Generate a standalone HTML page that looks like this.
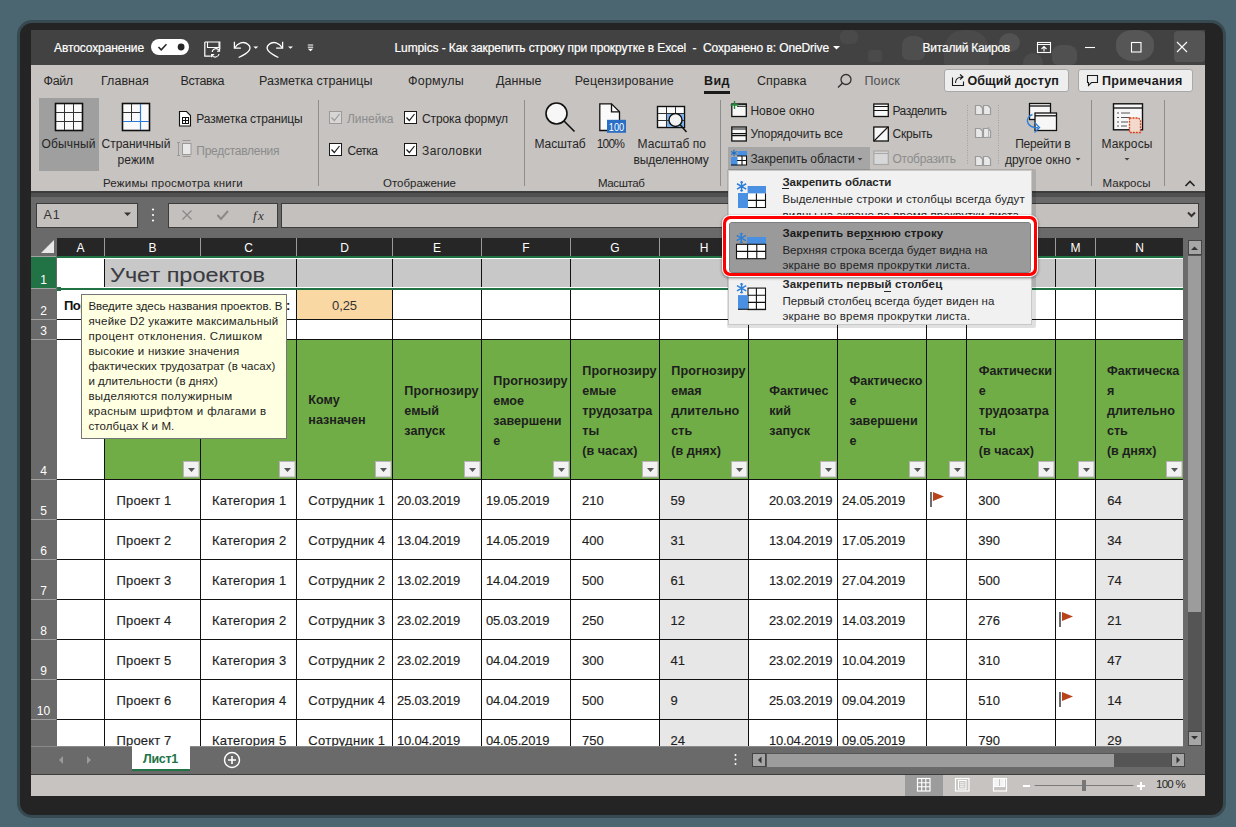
<!DOCTYPE html><html><head><meta charset="utf-8"><style>
*{margin:0;padding:0;box-sizing:border-box}
html,body{width:1236px;height:827px;overflow:hidden;background:#4b6670}
body{position:relative;font-family:"Liberation Sans",sans-serif}
.a{position:absolute}
.t{position:absolute;white-space:pre;line-height:1}
svg{position:absolute;overflow:visible}
</style></head><body>
<div class="a" style="left:17px;top:20px;width:1209px;height:798px;background:rgba(10,10,10,0.3);border-radius:15px;"></div>
<div class="a" style="left:20px;top:23px;width:1203px;height:792px;background:#242424;border-radius:12px;"></div>
<div class="a" style="left:31px;top:30px;width:1174px;height:35px;background:#424242;"></div>
<div class="a" style="left:902px;top:36px;width:23px;height:24px;background:#4e4e4e;border-radius:9px 9px 6px 6px;"></div>
<div class="a" style="left:944px;top:30px;width:45px;height:35px;background:#4a4a4a;border-radius:20px 20px 3px 3px;"></div>
<div class="a" style="left:999px;top:33px;width:21px;height:19px;background:#525252;border-radius:50%;"></div>
<div class="a" style="left:868px;top:50px;width:14px;height:12px;background:#4a4a4a;border-radius:3px;"></div>
<div class="a" style="left:840px;top:30px;width:18px;height:14px;background:#4a4a4a;border-radius:6px;"></div>
<div class="a" style="left:1023px;top:53px;width:20px;height:12px;background:#4c4c4c;border-radius:10px 10px 0 0;"></div>
<div class="a" style="left:1052px;top:45px;width:25px;height:20px;background:#505050;border-radius:40% 40% 6px 6px;"></div>
<div class="a" style="left:1116px;top:30px;width:38px;height:31px;background:#565656;border-radius:45%;"></div>
<div class="a" style="left:1174px;top:31px;width:31px;height:31px;background:#545454;border-radius:4px;"></div>
<span class="t" id="t0" style="letter-spacing:-0.106px;left:54px;top:41.84px;font-size:12px;color:#ffffff;-webkit-text-stroke:0.2px #fff;">Автосохранение</span>
<div class="a" style="left:151px;top:39px;width:38px;height:16px;background:#fff;border-radius:8px;"></div>
<svg style="left:0;top:0" width="1236" height="827"><path d="M158.5 47 l2.7 2.8 l5.3 -5.6" stroke="#262626" stroke-width="1.5" fill="none"/><circle cx="181.1" cy="47" r="3.4" fill="#262626"/><path d="M204.8 42 h15 v7 M204.8 42 v14.2 h6" stroke="#fff" stroke-width="1.2" fill="none"/><path d="M207.5 42 v5.5 h11.5 v-5.5" stroke="#fff" stroke-width="1.1" fill="none"/><path d="M212.2 52 a3.8 3.8 0 0 1 7 -1.5 M219.6 48.6 v2.6 h-2.6 M219 54 a3.8 3.8 0 0 1 -7 1.2 M211.6 57.2 v-2.6 h2.6" stroke="#fff" stroke-width="1.1" fill="none"/><path d="M234.4 41.8 v6.3 h6.5" stroke="#fff" stroke-width="1.3" fill="none"/><path d="M234.6 48 c3 -5 9 -7.5 13.5 -3.5 c4 3.5 2 8 -9.5 13" stroke="#fff" stroke-width="1.3" fill="none"/><path d="M253.3 46.5 h5 l-2.5 2.3 z" fill="#fff"/><path d="M282.6 41.8 v6.3 h-6.5" stroke="#fff" stroke-width="1.3" fill="none"/><path d="M282.4 48 c-3 -5 -9 -7.5 -13.5 -3.5 c-4 3.5 -1.5 8 9.5 13" stroke="#fff" stroke-width="1.3" fill="none"/><path d="M288 46.5 h5 l-2.5 2.3 z" fill="#fff"/><path d="M307.8 45 h5.4 M307.8 47.2 h5.4" stroke="#fff" stroke-width="1"/><path d="M307.8 48.8 h5.4 l-2.7 2.4 z" fill="#fff"/><path d="M833 46 h7 l-3.5 3.5 z" fill="#fff"/><rect x="1037.5" y="42.5" width="13" height="10" stroke="#fff" stroke-width="1.1" fill="none"/><path d="M1037.5 44.5 h13 M1044 51.5 v-5 M1041.5 49 l2.5 -2.5 l2.5 2.5" stroke="#fff" stroke-width="1.1" fill="none"/><path d="M1085 47.5 h10" stroke="#fff" stroke-width="1.1"/><rect x="1131.5" y="42.5" width="9.5" height="9.5" stroke="#fff" stroke-width="1.1" fill="none"/><path d="M1177 42 l10 10 M1187 42 l-10 10" stroke="#fff" stroke-width="1.1"/></svg>
<span class="t" id="t1" style="letter-spacing:-0.103px;left:394.5px;top:41.84px;font-size:12px;color:#ffffff;-webkit-text-stroke:0.2px #fff;">Lumpics - Как закрепить строку при прокрутке в Excel  -  Сохранено в: OneDrive</span>
<span class="t" id="t2" style="letter-spacing:-0.227px;left:922.6px;top:41.84px;font-size:12px;color:#ffffff;-webkit-text-stroke:0.2px #fff;">Виталий Каиров</span>
<div class="a" style="left:31px;top:65px;width:1174px;height:127px;background:#c6c3c0;"></div>
<div class="a" style="left:31px;top:191px;width:1174px;height:2px;background:#3c3c3c;"></div>
<span class="t" id="t3" style="letter-spacing:-0.409px;left:43.6px;top:74.92px;font-size:12.5px;color:#262626;">Файл</span>
<span class="t" id="t4" style="letter-spacing:0.032px;left:101px;top:74.92px;font-size:12.5px;color:#262626;">Главная</span>
<span class="t" id="t5" style="letter-spacing:-0.424px;left:180.5px;top:74.92px;font-size:12.5px;color:#262626;">Вставка</span>
<span class="t" id="t6" style="letter-spacing:-0.000px;left:259px;top:74.92px;font-size:12.5px;color:#262626;">Разметка страницы</span>
<span class="t" id="t7" style="letter-spacing:0.228px;left:408px;top:74.92px;font-size:12.5px;color:#262626;">Формулы</span>
<span class="t" id="t8" style="letter-spacing:0.071px;left:496px;top:74.92px;font-size:12.5px;color:#262626;">Данные</span>
<span class="t" id="t9" style="letter-spacing:0.191px;left:574.8px;top:74.92px;font-size:12.5px;color:#262626;">Рецензирование</span>
<span class="t" id="t10" style="letter-spacing:0.065px;left:757px;top:74.92px;font-size:12.5px;color:#262626;">Справка</span>
<span class="t" id="t11" style="letter-spacing:0.348px;left:704px;top:74.92px;font-size:12.5px;color:#1a1a1a;font-weight:700;">Вид</span>
<div class="a" style="left:704px;top:91px;width:26px;height:3px;background:#1a1a1a;"></div>
<span class="t" id="t12" style="letter-spacing:0.192px;left:864.4px;top:74.92px;font-size:12.5px;color:#505050;">Поиск</span>
<svg style="left:0;top:0" width="1236" height="827"><circle cx="846" cy="79.5" r="5" stroke="#333" stroke-width="1.3" fill="none"/><path d="M842.5 83 l-4.5 4.5" stroke="#333" stroke-width="1.5"/></svg>
<div class="a" style="left:943.7px;top:69px;width:125.5px;height:23px;background:#eeeeee;border:1px solid #a8a8a8;border-radius:3px;"></div>
<div class="a" style="left:1078.4px;top:69px;width:114.3px;height:23px;background:#eeeeee;border:1px solid #a8a8a8;border-radius:3px;"></div>
<span class="t" id="t13" style="letter-spacing:0.123px;left:967.4px;top:74.92px;font-size:12.5px;color:#1a1a1a;font-weight:700;">Общий доступ</span>
<span class="t" id="t14" style="letter-spacing:0.366px;left:1102px;top:74.92px;font-size:12.5px;color:#1a1a1a;font-weight:700;">Примечания</span>
<svg style="left:0;top:0" width="1236" height="827"><path d="M952.5 77.5 v8 h11 v-4" stroke="#1a1a1a" stroke-width="1.1" fill="none"/><path d="M955.5 83 c0 -4 3 -6 7 -6 M960 74.5 l3 2.5 l-3 2.5" stroke="#1a1a1a" stroke-width="1.1" fill="none"/><path d="M1087.5 75.5 h10 v7 h-6 l-3 3 v-3 h-1 z" stroke="#1a1a1a" stroke-width="1.1" fill="none"/></svg>
<div class="a" style="left:39px;top:98px;width:60px;height:73px;background:#9f9f9f;"></div>
<span class="t" id="t15" style="letter-spacing:0.136px;left:41.5px;top:138.14px;font-size:12px;color:#262626;">Обычный</span>
<span class="t" id="t16" style="letter-spacing:-0.025px;left:101.6px;top:138.14px;font-size:12px;color:#262626;">Страничный</span>
<span class="t" id="t17" style="letter-spacing:0.159px;left:117.4px;top:154.34px;font-size:12px;color:#262626;">режим</span>
<span class="t" id="t18" style="letter-spacing:-0.157px;left:196.3px;top:113.04px;font-size:12px;color:#262626;">Разметка страницы</span>
<span class="t" id="t19" style="letter-spacing:-0.266px;left:196.3px;top:144.64px;font-size:12px;color:#8c8c8c;">Представления</span>
<span class="t" id="t20" style="letter-spacing:0.208px;left:103px;top:177.57px;font-size:11.5px;color:#262626;">Режимы просмотра книги</span>
<div class="a" style="left:317.5px;top:100px;width:1px;height:86px;background:#8e8e8e;"></div>
<div class="a" style="left:523.5px;top:100px;width:1px;height:86px;background:#8e8e8e;"></div>
<div class="a" style="left:719.5px;top:100px;width:1px;height:86px;background:#8e8e8e;"></div>
<div class="a" style="left:1090.5px;top:100px;width:1px;height:86px;background:#8e8e8e;"></div>
<div class="a" style="left:1163.5px;top:100px;width:1px;height:86px;background:#8e8e8e;"></div>
<span class="t" id="t21" style="letter-spacing:-0.040px;left:347px;top:113.04px;font-size:12px;color:#8c8c8c;">Линейка</span>
<span class="t" id="t22" style="letter-spacing:-0.585px;left:347.6px;top:144.64px;font-size:12px;color:#262626;">Сетка</span>
<span class="t" id="t23" style="letter-spacing:-0.106px;left:422px;top:113.04px;font-size:12px;color:#262626;">Строка формул</span>
<span class="t" id="t24" style="letter-spacing:0.378px;left:422px;top:144.64px;font-size:12px;color:#262626;">Заголовки</span>
<span class="t" id="t25" style="letter-spacing:-0.011px;left:383px;top:177.57px;font-size:11.5px;color:#262626;">Отображение</span>
<span class="t" id="t26" style="letter-spacing:-0.006px;left:534.4px;top:137.84px;font-size:12px;color:#262626;">Масштаб</span>
<span class="t" id="t27" style="letter-spacing:-0.876px;left:596.8px;top:137.84px;font-size:12px;color:#262626;">100%</span>
<span class="t" id="t28" style="letter-spacing:0.054px;left:637.6px;top:137.84px;font-size:12px;color:#262626;">Масштаб по</span>
<span class="t" id="t29" style="letter-spacing:-0.106px;left:633.5px;top:153.64px;font-size:12px;color:#262626;">выделенному</span>
<span class="t" id="t30" style="letter-spacing:-0.400px;left:598px;top:177.57px;font-size:11.5px;color:#262626;">Масштаб</span>
<div class="a" style="left:728.2px;top:147.4px;width:141.5px;height:22.2px;background:#a6a6a6;"></div>
<span class="t" id="t31" style="letter-spacing:0.060px;left:750.4px;top:104.84px;font-size:12px;color:#262626;">Новое окно</span>
<span class="t" id="t32" style="letter-spacing:-0.084px;left:750.4px;top:128.44px;font-size:12px;color:#262626;">Упорядочить все</span>
<span class="t" id="t33" style="letter-spacing:-0.087px;left:750.4px;top:152.64px;font-size:12px;color:#262626;">Закрепить области</span>
<span class="t" id="t34" style="letter-spacing:-0.436px;left:892.4px;top:104.84px;font-size:12px;color:#262626;">Разделить</span>
<span class="t" id="t35" style="letter-spacing:-0.161px;left:892.4px;top:128.44px;font-size:12px;color:#262626;">Скрыть</span>
<span class="t" id="t36" style="letter-spacing:-0.212px;left:892.4px;top:152.64px;font-size:12px;color:#8c8c8c;">Отобразить</span>
<span class="t" id="t37" style="letter-spacing:-0.218px;left:1015.2px;top:137.84px;font-size:12px;color:#262626;">Перейти в</span>
<span class="t" id="t38" style="letter-spacing:0.040px;left:1005px;top:153.64px;font-size:12px;color:#262626;">другое окно</span>
<span class="t" id="t39" style="letter-spacing:0.153px;left:1101.5px;top:137.84px;font-size:12px;color:#262626;">Макросы</span>
<span class="t" id="t40" style="letter-spacing:0.021px;left:1102.5px;top:177.57px;font-size:11.5px;color:#262626;">Макросы</span>
<svg style="left:0;top:0" width="1236" height="827"><rect x="55.5" y="103.5" width="27" height="27" fill="#fafafa" stroke="#111" stroke-width="1.6"/><path d="M64.5 104 v26 M73.5 104 v26 M56 112.5 h26 M56 121.5 h26" stroke="#333" stroke-width="1"/><rect x="122.5" y="103.5" width="27" height="27" fill="#fafafa" stroke="#111" stroke-width="1.6"/><path d="M131.5 104 v18 M123 112.5 h17" stroke="#333" stroke-width="1"/><path d="M140.5 104 v26 M123 121.5 h26" stroke="#2b79d0" stroke-width="1.2"/><path d="M179.5 111.5 h7 l4 4 v10.5 h-11 z" fill="#fff" stroke="#111" stroke-width="1.1"/><rect x="182.5" y="117.5" width="6" height="6" fill="none" stroke="#111" stroke-width="1"/><path d="M185.5 117.5 v6 M182.5 120.5 h6" stroke="#111" stroke-width="1"/><path d="M178.5 142 v14 M177 142.5 h3 M177 155.5 h3" stroke="#999" stroke-width="1"/><path d="M182.5 140.5 h8 M182.5 156.5 h8" stroke="#999" stroke-width="1"/><rect x="182.5" y="143.5" width="8.5" height="11" fill="#e8e8e8" stroke="#999" stroke-width="1"/><rect x="329.5" y="111.5" width="12" height="12" fill="#d8d6d4" stroke="#9a9a9a" stroke-width="1"/><path d="M331.5 117.5 l2.8 3 l5.2 -6.5" stroke="#9a9a9a" stroke-width="1.2" fill="none"/><rect x="329.5" y="143.5" width="12" height="12" fill="#fff" stroke="#1a1a1a" stroke-width="1"/><path d="M331.5 149.5 l2.8 3 l5.2 -6.5" stroke="#1a1a1a" stroke-width="1.2" fill="none"/><rect x="404.5" y="111.5" width="12" height="12" fill="#fff" stroke="#1a1a1a" stroke-width="1"/><path d="M406.5 117.5 l2.8 3 l5.2 -6.5" stroke="#1a1a1a" stroke-width="1.2" fill="none"/><rect x="404.5" y="143.5" width="12" height="12" fill="#fff" stroke="#1a1a1a" stroke-width="1"/><path d="M406.5 149.5 l2.8 3 l5.2 -6.5" stroke="#1a1a1a" stroke-width="1.2" fill="none"/><circle cx="556.5" cy="113.5" r="10.5" fill="#f7f7f7" stroke="#111" stroke-width="1.6"/><path d="M564 121 l10.5 10.5" stroke="#111" stroke-width="1.6"/><path d="M599.8 103.8 h11.7 l8 8 v18.7 h-19.7 z" fill="#fafafa" stroke="#111" stroke-width="1.3"/><path d="M611.5 103.8 v8 h8" fill="none" stroke="#111" stroke-width="1.3"/><rect x="607" y="119.8" width="19" height="13" fill="#2b6fc4"/><text x="608.8" y="130.8" font-family="Liberation Sans" font-size="11" fill="#fff" textLength="15.4" lengthAdjust="spacingAndGlyphs">100</text><rect x="657.5" y="106.5" width="27" height="21" fill="#fafafa" stroke="#111" stroke-width="1.4"/><rect x="666" y="113.5" width="18" height="13.5" fill="#7fb2ea"/><path d="M666.5 107 v20 M675.5 107 v20 M658 113.5 h26 M658 120.5 h26" stroke="#333" stroke-width="1"/><circle cx="675.5" cy="120" r="6.5" fill="#f2f2f2" stroke="#111" stroke-width="1.4"/><path d="M680 124.5 l6.5 7.5" stroke="#111" stroke-width="1.5"/><rect x="731.8" y="104" width="14.5" height="12.5" fill="#f7f7f7" stroke="#111" stroke-width="1.3"/><path d="M737 104.3 h9.5 M737 106.3 h9.5" stroke="#111" stroke-width="1.1"/><path d="M734.5 101 v8 M730.5 105 h8" stroke="#1f8a3a" stroke-width="1.4"/><rect x="731.8" y="127" width="14.5" height="14" fill="#f7f7f7" stroke="#111" stroke-width="1.3"/><path d="M732 129 h14 M732 133.6 h14 M732 135.6 h14" stroke="#111" stroke-width="1.1"/><rect x="737" y="156" width="10" height="9" fill="#fff"/><rect x="737.5" y="151" width="9.5" height="5" fill="#4a90e2"/><rect x="731" y="157" width="6.5" height="8.5" fill="#4a90e2"/><path d="M742 156 v9.5 M737 160.5 h10 M731 165 h16 M746.5 156 v9.5 M737 156 h10" stroke="#111" stroke-width="1.1"/><path d="M734 149.8 v6.4 M731.2 151.4 l5.6 3.2 M736.8 151.4 l-5.6 3.2" stroke="#1f6fc8" stroke-width="1.2"/><path d="M857.5 158 h5 l-2.5 2.5 z" fill="#444"/><rect x="873.8" y="104" width="14.5" height="12.5" fill="#f7f7f7" stroke="#111" stroke-width="1.3"/><path d="M874 106.5 h14 M874 110.5 h14" stroke="#111" stroke-width="1.1"/><rect x="873.8" y="127" width="14.5" height="14" fill="#f7f7f7" stroke="#111" stroke-width="1.3"/><path d="M874 141 l14 -14" stroke="#111" stroke-width="1.1"/><rect x="873.8" y="151" width="14.5" height="13.5" fill="#d8d8d8" stroke="#a8a8a8" stroke-width="1.2"/><path d="M874 153.5 h14" stroke="#a8a8a8" stroke-width="1.1"/><path d="M975.5 105.5 h4.5 l2.5 2.5 v6.5 h-7 z" fill="#e8e8e8" stroke="#9a9a9a" stroke-width="1.2"/><path d="M983.5 105.5 h4.5 l2.5 2.5 v6.5 h-7 z" fill="#e8e8e8" stroke="#9a9a9a" stroke-width="1.2"/><path d="M975.5 128.5 h4.5 l2.5 2.5 v6.5 h-7 z" fill="#e8e8e8" stroke="#9a9a9a" stroke-width="1.2"/><path d="M983.5 128.5 h4.5 l2.5 2.5 v6.5 h-7 z" fill="#e8e8e8" stroke="#9a9a9a" stroke-width="1.2"/><path d="M975.5 156.5 h4.5 l2.5 2.5 v6.5 h-7 z" fill="#e8e8e8" stroke="#9a9a9a" stroke-width="1.2"/><path d="M983.5 156.5 h4.5 l2.5 2.5 v6.5 h-7 z" fill="#e8e8e8" stroke="#9a9a9a" stroke-width="1.2"/><path d="M988.5 127 v11 M987 128.5 l1.5 -1.5 l1.5 1.5 M987 136.5 l1.5 1.5 l1.5 -1.5" stroke="#aaa" stroke-width="0.8" fill="none"/><path d="M967.5 105 v60" stroke="#a0a0a0" stroke-width="1" stroke-dasharray="1 1.5"/><path d="M998.5 105 v60" stroke="#a0a0a0" stroke-width="1" stroke-dasharray="1 1.5"/><rect x="1029.5" y="103.5" width="21" height="16" fill="#f7f7f7" stroke="#111" stroke-width="1.3"/><path d="M1029.5 106 h21" stroke="#111" stroke-width="1.3"/><rect x="1035" y="113" width="21.5" height="17.5" fill="#f7f7f7" stroke="#111" stroke-width="1.3"/><path d="M1035 115.8 h21.5" stroke="#111" stroke-width="1.3"/><path d="M1032.5 114.5 c-8 3 -7 13 6 13.5" stroke="#2d7fd8" stroke-width="1.4" fill="none"/><path d="M1034.5 122.5 l5 5 l-5 5" stroke="#2d7fd8" stroke-width="1.4" fill="none"/><path d="M1075.5 158 h5 l-2.5 2.5 z" fill="#444"/><rect x="1113.5" y="103.8" width="29" height="26" fill="#f7f7f7" stroke="#111" stroke-width="1.4"/><path d="M1114 108 h28" stroke="#111" stroke-width="1.3"/><path d="M1117 113 h2 M1121 113 h9 M1117 117.5 h2 M1121 117.5 h9 M1117 122 h2 M1121 122 h7 M1117 126 h2 M1121 126 h6" stroke="#555" stroke-width="1"/><path d="M1129.5 118 h9 l2 2 v12.5 h-11 z" fill="#f3d9cc" stroke="#d9421b" stroke-width="1.3" stroke-dasharray="2 1"/><path d="M1124.5 158 h5 l-2.5 2.5 z" fill="#444"/><path d="M1185.5 186 l4.5 -4.5 l4.5 4.5" stroke="#222" stroke-width="1.6" fill="none"/></svg>
<div class="a" style="left:31px;top:193px;width:1174px;height:553px;background:#6a6a6a;"></div>
<div class="a" style="left:31px;top:193px;width:1174px;height:4px;background:#505050;"></div>
<div class="a" style="left:36px;top:202.5px;width:101.5px;height:25px;background:#c3c0bd;border:1px solid #3c3c3c;"></div>
<span class="t" id="t41" style="letter-spacing:0.852px;left:43.5px;top:209.42px;font-size:12.5px;color:#333;">A1</span>
<div class="a" style="left:168.3px;top:202.5px;width:109.3px;height:25px;background:#c3c0bd;border:1px solid #3c3c3c;"></div>
<div class="a" style="left:281.2px;top:202.5px;width:918.3px;height:25px;background:#c3c0bd;border:1px solid #3c3c3c;"></div>
<svg style="left:0;top:0" width="1236" height="827"><path d="M124 212.5 h7 l-3.5 3.5 z" fill="#333"/><circle cx="153" cy="209.5" r="1.1" fill="#fff"/><circle cx="153" cy="215" r="1.1" fill="#fff"/><circle cx="153" cy="220.5" r="1.1" fill="#fff"/><path d="M182.5 210.5 l9 9 M191.5 210.5 l-9 9" stroke="#8a8a8a" stroke-width="1.3"/><path d="M217.5 215 l3.5 4 l7 -8" stroke="#8a8a8a" stroke-width="2" fill="none"/><path d="M1188 212.5 l3.5 3.5 l3.5 -3.5" stroke="#333" stroke-width="2" fill="none"/></svg>
<span class="t" id="t42" style="letter-spacing:1.305px;left:253px;top:209.00px;font-size:13px;color:#333;font-family:'Liberation Serif',serif;font-style:italic;">fx</span>
<div class="a" style="left:31px;top:238px;width:1152px;height:18px;background:#6a6a6a;"></div>
<div class="a" style="left:57px;top:238px;width:1126px;height:18px;background:#262626;"></div>
<svg style="left:0;top:0" width="1236" height="827"><path d="M41 253 h13 v-13 z" fill="#e8e8e8"/></svg>
<div class="a" style="left:104px;top:238px;width:1px;height:18px;background:#9a9a9a;"></div>
<div class="t" style="left:57px;width:47px;top:242.24px;font-size:12px;color:#fff;text-align:center">A</div>
<div class="a" style="left:200px;top:238px;width:1px;height:18px;background:#9a9a9a;"></div>
<div class="t" style="left:105px;width:95px;top:242.24px;font-size:12px;color:#fff;text-align:center">B</div>
<div class="a" style="left:296px;top:238px;width:1px;height:18px;background:#9a9a9a;"></div>
<div class="t" style="left:201px;width:95px;top:242.24px;font-size:12px;color:#fff;text-align:center">C</div>
<div class="a" style="left:392px;top:238px;width:1px;height:18px;background:#9a9a9a;"></div>
<div class="t" style="left:297px;width:95px;top:242.24px;font-size:12px;color:#fff;text-align:center">D</div>
<div class="a" style="left:481px;top:238px;width:1px;height:18px;background:#9a9a9a;"></div>
<div class="t" style="left:393px;width:88px;top:242.24px;font-size:12px;color:#fff;text-align:center">E</div>
<div class="a" style="left:570px;top:238px;width:1px;height:18px;background:#9a9a9a;"></div>
<div class="t" style="left:482px;width:88px;top:242.24px;font-size:12px;color:#fff;text-align:center">F</div>
<div class="a" style="left:659px;top:238px;width:1px;height:18px;background:#9a9a9a;"></div>
<div class="t" style="left:571px;width:88px;top:242.24px;font-size:12px;color:#fff;text-align:center">G</div>
<div class="a" style="left:748px;top:238px;width:1px;height:18px;background:#9a9a9a;"></div>
<div class="t" style="left:660px;width:88px;top:242.24px;font-size:12px;color:#fff;text-align:center">H</div>
<div class="a" style="left:837px;top:238px;width:1px;height:18px;background:#9a9a9a;"></div>
<div class="t" style="left:749px;width:88px;top:242.24px;font-size:12px;color:#fff;text-align:center">I</div>
<div class="a" style="left:926px;top:238px;width:1px;height:18px;background:#9a9a9a;"></div>
<div class="t" style="left:838px;width:88px;top:242.24px;font-size:12px;color:#fff;text-align:center">J</div>
<div class="a" style="left:966px;top:238px;width:1px;height:18px;background:#9a9a9a;"></div>
<div class="t" style="left:927px;width:39px;top:242.24px;font-size:12px;color:#fff;text-align:center">K</div>
<div class="a" style="left:1055px;top:238px;width:1px;height:18px;background:#9a9a9a;"></div>
<div class="t" style="left:967px;width:88px;top:242.24px;font-size:12px;color:#fff;text-align:center">L</div>
<div class="a" style="left:1095px;top:238px;width:1px;height:18px;background:#9a9a9a;"></div>
<div class="t" style="left:1056px;width:39px;top:242.24px;font-size:12px;color:#fff;text-align:center">M</div>
<div class="t" style="left:1096px;width:87px;top:242.24px;font-size:12px;color:#fff;text-align:center">N</div>
<div class="a" style="left:57px;top:256px;width:1126px;height:490px;background:#ffffff;"></div>
<div class="a" style="left:31px;top:256px;width:25px;height:32px;background:#217346;"></div>
<div class="a" style="left:31px;top:288px;width:25px;height:31px;background:#6a6a6a;"></div>
<div class="a" style="left:31px;top:319px;width:25px;height:20px;background:#6a6a6a;"></div>
<div class="a" style="left:31px;top:339px;width:25px;height:140px;background:#6a6a6a;"></div>
<div class="a" style="left:31px;top:479px;width:25px;height:40px;background:#6a6a6a;"></div>
<div class="a" style="left:31px;top:519px;width:25px;height:40px;background:#6a6a6a;"></div>
<div class="a" style="left:31px;top:559px;width:25px;height:40px;background:#6a6a6a;"></div>
<div class="a" style="left:31px;top:599px;width:25px;height:40px;background:#6a6a6a;"></div>
<div class="a" style="left:31px;top:639px;width:25px;height:40px;background:#6a6a6a;"></div>
<div class="a" style="left:31px;top:679px;width:25px;height:40px;background:#6a6a6a;"></div>
<div class="a" style="left:31px;top:719px;width:25px;height:27px;background:#6a6a6a;"></div>
<div class="a" style="left:31px;top:256px;width:25px;height:1px;background:#a0a0a0;"></div>
<div class="a" style="left:31px;top:288px;width:25px;height:1px;background:#a0a0a0;"></div>
<div class="t" style="left:31px;width:25px;top:273.64px;font-size:12px;color:#fff;text-align:center">1</div>
<div class="a" style="left:31px;top:319px;width:25px;height:1px;background:#a0a0a0;"></div>
<div class="t" style="left:31px;width:25px;top:304.64px;font-size:12px;color:#fff;text-align:center">2</div>
<div class="a" style="left:31px;top:339px;width:25px;height:1px;background:#a0a0a0;"></div>
<div class="t" style="left:31px;width:25px;top:324.64px;font-size:12px;color:#fff;text-align:center">3</div>
<div class="a" style="left:31px;top:479px;width:25px;height:1px;background:#a0a0a0;"></div>
<div class="t" style="left:31px;width:25px;top:464.64px;font-size:12px;color:#fff;text-align:center">4</div>
<div class="a" style="left:31px;top:519px;width:25px;height:1px;background:#a0a0a0;"></div>
<div class="t" style="left:31px;width:25px;top:504.64px;font-size:12px;color:#fff;text-align:center">5</div>
<div class="a" style="left:31px;top:559px;width:25px;height:1px;background:#a0a0a0;"></div>
<div class="t" style="left:31px;width:25px;top:544.64px;font-size:12px;color:#fff;text-align:center">6</div>
<div class="a" style="left:31px;top:599px;width:25px;height:1px;background:#a0a0a0;"></div>
<div class="t" style="left:31px;width:25px;top:584.64px;font-size:12px;color:#fff;text-align:center">7</div>
<div class="a" style="left:31px;top:639px;width:25px;height:1px;background:#a0a0a0;"></div>
<div class="t" style="left:31px;width:25px;top:624.64px;font-size:12px;color:#fff;text-align:center">8</div>
<div class="a" style="left:31px;top:679px;width:25px;height:1px;background:#a0a0a0;"></div>
<div class="t" style="left:31px;width:25px;top:664.64px;font-size:12px;color:#fff;text-align:center">9</div>
<div class="a" style="left:31px;top:719px;width:25px;height:1px;background:#a0a0a0;"></div>
<div class="t" style="left:31px;width:25px;top:704.64px;font-size:12px;color:#fff;text-align:center">10</div>
<div class="a" style="left:105px;top:259px;width:1078px;height:28px;background:#c8c8c8;"></div>
<div class="a" style="left:105px;top:339px;width:1078px;height:140px;background:#70ad47;"></div>
<div class="a" style="left:660px;top:480px;width:88px;height:266px;background:#e7e7e7;"></div>
<div class="a" style="left:1096px;top:480px;width:87px;height:266px;background:#e7e7e7;"></div>
<div class="a" style="left:297px;top:290px;width:95px;height:29px;background:#fad8a4;"></div>
<div class="a" style="left:57px;top:319px;width:1126px;height:1px;background:#111;"></div>
<div class="a" style="left:57px;top:339px;width:1126px;height:1px;background:#111;"></div>
<div class="a" style="left:57px;top:479px;width:1126px;height:1px;background:#111;"></div>
<div class="a" style="left:57px;top:519px;width:1126px;height:1px;background:#111;"></div>
<div class="a" style="left:57px;top:559px;width:1126px;height:1px;background:#111;"></div>
<div class="a" style="left:57px;top:599px;width:1126px;height:1px;background:#111;"></div>
<div class="a" style="left:57px;top:639px;width:1126px;height:1px;background:#111;"></div>
<div class="a" style="left:57px;top:679px;width:1126px;height:1px;background:#111;"></div>
<div class="a" style="left:57px;top:719px;width:1126px;height:1px;background:#111;"></div>
<div class="a" style="left:104px;top:259px;width:1px;height:28px;background:#111;"></div>
<div class="a" style="left:104px;top:290px;width:1px;height:456px;background:#111;"></div>
<div class="a" style="left:200px;top:259px;width:1px;height:28px;background:#111;"></div>
<div class="a" style="left:200px;top:290px;width:1px;height:456px;background:#111;"></div>
<div class="a" style="left:296px;top:259px;width:1px;height:28px;background:#111;"></div>
<div class="a" style="left:296px;top:290px;width:1px;height:456px;background:#111;"></div>
<div class="a" style="left:392px;top:259px;width:1px;height:28px;background:#111;"></div>
<div class="a" style="left:392px;top:290px;width:1px;height:456px;background:#111;"></div>
<div class="a" style="left:481px;top:259px;width:1px;height:28px;background:#111;"></div>
<div class="a" style="left:481px;top:290px;width:1px;height:456px;background:#111;"></div>
<div class="a" style="left:570px;top:259px;width:1px;height:28px;background:#111;"></div>
<div class="a" style="left:570px;top:290px;width:1px;height:456px;background:#111;"></div>
<div class="a" style="left:659px;top:259px;width:1px;height:28px;background:#111;"></div>
<div class="a" style="left:659px;top:290px;width:1px;height:456px;background:#111;"></div>
<div class="a" style="left:748px;top:259px;width:1px;height:28px;background:#111;"></div>
<div class="a" style="left:748px;top:290px;width:1px;height:456px;background:#111;"></div>
<div class="a" style="left:837px;top:259px;width:1px;height:28px;background:#111;"></div>
<div class="a" style="left:837px;top:290px;width:1px;height:456px;background:#111;"></div>
<div class="a" style="left:926px;top:259px;width:1px;height:28px;background:#111;"></div>
<div class="a" style="left:926px;top:290px;width:1px;height:456px;background:#111;"></div>
<div class="a" style="left:966px;top:259px;width:1px;height:28px;background:#111;"></div>
<div class="a" style="left:966px;top:290px;width:1px;height:456px;background:#111;"></div>
<div class="a" style="left:1055px;top:259px;width:1px;height:28px;background:#111;"></div>
<div class="a" style="left:1055px;top:290px;width:1px;height:456px;background:#111;"></div>
<div class="a" style="left:1095px;top:259px;width:1px;height:28px;background:#111;"></div>
<div class="a" style="left:1095px;top:290px;width:1px;height:456px;background:#111;"></div>
<div class="a" style="left:200px;top:259px;width:1px;height:28px;background:#c8c8c8;"></div>
<div class="a" style="left:104px;top:290px;width:1px;height:29px;background:#fff;"></div>
<div class="a" style="left:200px;top:290px;width:1px;height:29px;background:#fff;"></div>
<div class="a" style="left:57px;top:256px;width:1126px;height:2px;background:#217346;"></div>
<div class="a" style="left:57px;top:288px;width:1126px;height:2px;background:#217346;"></div>
<div class="a" style="left:56.5px;top:286.5px;width:4px;height:4px;background:#217346;"></div>
<span class="t" id="t43" style="transform-origin:0 0;transform:scaleX(1.1169);left:109.6px;top:263.72px;font-size:21px;color:#3a3b42;-webkit-text-stroke:0.1px #3a3c44;">Учет проектов</span>
<span class="t" id="t44" style="letter-spacing:-0.469px;left:64px;top:298.50px;font-size:13px;color:#111;font-weight:700;">Пороговое значение отклонения в %:</span>
<span class="t" id="t45" style="letter-spacing:-0.078px;left:332px;top:298.50px;font-size:13px;color:#333;">0,25</span>
<span class="t" id="t46" style="left:308.3px;top:394.33px;font-size:12.6px;color:#1e1e1e;font-weight:700;">Кому</span>
<span class="t" id="t47" style="left:308.3px;top:414.33px;font-size:12.6px;color:#1e1e1e;font-weight:700;">назначен</span>
<span class="t" id="t48" style="letter-spacing:0.104px;left:404.3px;top:384.73px;font-size:12.6px;color:#1e1e1e;font-weight:700;">Прогнозиру</span>
<span class="t" id="t49" style="left:404.3px;top:404.73px;font-size:12.6px;color:#1e1e1e;font-weight:700;">емый</span>
<span class="t" id="t50" style="left:404.3px;top:424.73px;font-size:12.6px;color:#1e1e1e;font-weight:700;">запуск</span>
<span class="t" id="t51" style="letter-spacing:0.104px;left:493.3px;top:374.73px;font-size:12.6px;color:#1e1e1e;font-weight:700;">Прогнозиру</span>
<span class="t" id="t52" style="left:493.3px;top:394.73px;font-size:12.6px;color:#1e1e1e;font-weight:700;">емое</span>
<span class="t" id="t53" style="left:493.3px;top:414.73px;font-size:12.6px;color:#1e1e1e;font-weight:700;">завершени</span>
<span class="t" id="t54" style="left:493.3px;top:434.73px;font-size:12.6px;color:#1e1e1e;font-weight:700;">е</span>
<span class="t" id="t55" style="letter-spacing:0.104px;left:582.3px;top:364.83px;font-size:12.6px;color:#1e1e1e;font-weight:700;">Прогнозиру</span>
<span class="t" id="t56" style="left:582.3px;top:384.83px;font-size:12.6px;color:#1e1e1e;font-weight:700;">емые</span>
<span class="t" id="t57" style="left:582.3px;top:404.83px;font-size:12.6px;color:#1e1e1e;font-weight:700;">трудозатра</span>
<span class="t" id="t58" style="left:582.3px;top:424.83px;font-size:12.6px;color:#1e1e1e;font-weight:700;">ты</span>
<span class="t" id="t59" style="left:582.3px;top:444.83px;font-size:12.6px;color:#1e1e1e;font-weight:700;">(в часах)</span>
<span class="t" id="t60" style="letter-spacing:0.104px;left:671.3px;top:364.83px;font-size:12.6px;color:#1e1e1e;font-weight:700;">Прогнозиру</span>
<span class="t" id="t61" style="left:671.3px;top:384.83px;font-size:12.6px;color:#1e1e1e;font-weight:700;">емая</span>
<span class="t" id="t62" style="left:671.3px;top:404.83px;font-size:12.6px;color:#1e1e1e;font-weight:700;">длительно</span>
<span class="t" id="t63" style="left:671.3px;top:424.83px;font-size:12.6px;color:#1e1e1e;font-weight:700;">сть</span>
<span class="t" id="t64" style="left:671.3px;top:444.83px;font-size:12.6px;color:#1e1e1e;font-weight:700;">(в днях)</span>
<span class="t" id="t65" style="left:769.3px;top:384.73px;font-size:12.6px;color:#1e1e1e;font-weight:700;">Фактичес</span>
<span class="t" id="t66" style="left:769.3px;top:404.73px;font-size:12.6px;color:#1e1e1e;font-weight:700;">кий</span>
<span class="t" id="t67" style="left:769.3px;top:424.73px;font-size:12.6px;color:#1e1e1e;font-weight:700;">запуск</span>
<span class="t" id="t68" style="left:849.5px;top:374.73px;font-size:12.6px;color:#1e1e1e;font-weight:700;">Фактическо</span>
<span class="t" id="t69" style="left:849.5px;top:394.73px;font-size:12.6px;color:#1e1e1e;font-weight:700;">е</span>
<span class="t" id="t70" style="left:849.5px;top:414.73px;font-size:12.6px;color:#1e1e1e;font-weight:700;">завершени</span>
<span class="t" id="t71" style="left:849.5px;top:434.73px;font-size:12.6px;color:#1e1e1e;font-weight:700;">е</span>
<span class="t" id="t72" style="left:978.8px;top:364.83px;font-size:12.6px;color:#1e1e1e;font-weight:700;">Фактически</span>
<span class="t" id="t73" style="left:978.8px;top:384.83px;font-size:12.6px;color:#1e1e1e;font-weight:700;">е</span>
<span class="t" id="t74" style="left:978.8px;top:404.83px;font-size:12.6px;color:#1e1e1e;font-weight:700;">трудозатра</span>
<span class="t" id="t75" style="left:978.8px;top:424.83px;font-size:12.6px;color:#1e1e1e;font-weight:700;">ты</span>
<span class="t" id="t76" style="left:978.8px;top:444.83px;font-size:12.6px;color:#1e1e1e;font-weight:700;">(в часах)</span>
<span class="t" id="t77" style="left:1106.9px;top:364.83px;font-size:12.6px;color:#1e1e1e;font-weight:700;">Фактическа</span>
<span class="t" id="t78" style="left:1106.9px;top:384.83px;font-size:12.6px;color:#1e1e1e;font-weight:700;">я</span>
<span class="t" id="t79" style="left:1106.9px;top:404.83px;font-size:12.6px;color:#1e1e1e;font-weight:700;">длительно</span>
<span class="t" id="t80" style="left:1106.9px;top:424.83px;font-size:12.6px;color:#1e1e1e;font-weight:700;">сть</span>
<span class="t" id="t81" style="left:1106.9px;top:444.83px;font-size:12.6px;color:#1e1e1e;font-weight:700;">(в днях)</span>
<svg style="left:0;top:0" width="1236" height="827"><rect x="183.5" y="461.5" width="15.5" height="15.5" fill="#f2f2f2" stroke="#b9b3b9" stroke-width="1"/><path d="M188.0 468 h7 l-3.5 4 z" fill="#555"/><rect x="279.5" y="461.5" width="15.5" height="15.5" fill="#f2f2f2" stroke="#b9b3b9" stroke-width="1"/><path d="M284.0 468 h7 l-3.5 4 z" fill="#555"/><rect x="375.5" y="461.5" width="15.5" height="15.5" fill="#f2f2f2" stroke="#b9b3b9" stroke-width="1"/><path d="M380.0 468 h7 l-3.5 4 z" fill="#555"/><rect x="464.5" y="461.5" width="15.5" height="15.5" fill="#f2f2f2" stroke="#b9b3b9" stroke-width="1"/><path d="M469.0 468 h7 l-3.5 4 z" fill="#555"/><rect x="553.5" y="461.5" width="15.5" height="15.5" fill="#f2f2f2" stroke="#b9b3b9" stroke-width="1"/><path d="M558.0 468 h7 l-3.5 4 z" fill="#555"/><rect x="642.5" y="461.5" width="15.5" height="15.5" fill="#f2f2f2" stroke="#b9b3b9" stroke-width="1"/><path d="M647.0 468 h7 l-3.5 4 z" fill="#555"/><rect x="731.5" y="461.5" width="15.5" height="15.5" fill="#f2f2f2" stroke="#b9b3b9" stroke-width="1"/><path d="M736.0 468 h7 l-3.5 4 z" fill="#555"/><rect x="820.5" y="461.5" width="15.5" height="15.5" fill="#f2f2f2" stroke="#b9b3b9" stroke-width="1"/><path d="M825.0 468 h7 l-3.5 4 z" fill="#555"/><rect x="909.5" y="461.5" width="15.5" height="15.5" fill="#f2f2f2" stroke="#b9b3b9" stroke-width="1"/><path d="M914.0 468 h7 l-3.5 4 z" fill="#555"/><rect x="949.5" y="461.5" width="15.5" height="15.5" fill="#f2f2f2" stroke="#b9b3b9" stroke-width="1"/><path d="M954.0 468 h7 l-3.5 4 z" fill="#555"/><rect x="1038.5" y="461.5" width="15.5" height="15.5" fill="#f2f2f2" stroke="#b9b3b9" stroke-width="1"/><path d="M1043.0 468 h7 l-3.5 4 z" fill="#555"/><rect x="1078.5" y="461.5" width="15.5" height="15.5" fill="#f2f2f2" stroke="#b9b3b9" stroke-width="1"/><path d="M1083.0 468 h7 l-3.5 4 z" fill="#555"/><rect x="1166.5" y="461.5" width="15.5" height="15.5" fill="#f2f2f2" stroke="#b9b3b9" stroke-width="1"/><path d="M1171.0 468 h7 l-3.5 4 z" fill="#555"/></svg>
<span class="t" id="t82" style="letter-spacing:0.166px;left:116.5px;top:494.00px;font-size:13px;color:#1e1e1e;-webkit-text-stroke:0.15px #1e1e1e;">Проект 1</span>
<span class="t" id="t83" style="letter-spacing:0.252px;left:212px;top:494.00px;font-size:13px;color:#1e1e1e;-webkit-text-stroke:0.15px #1e1e1e;">Категория 1</span>
<span class="t" id="t84" style="letter-spacing:0.273px;left:308.3px;top:494.00px;font-size:13px;color:#1e1e1e;-webkit-text-stroke:0.15px #1e1e1e;">Сотрудник 1</span>
<span class="t" id="t85" style="letter-spacing:-0.178px;left:396.9px;top:494.00px;font-size:13px;color:#1e1e1e;-webkit-text-stroke:0.15px #1e1e1e;">20.03.2019</span>
<span class="t" id="t86" style="letter-spacing:-0.178px;left:486px;top:494.00px;font-size:13px;color:#1e1e1e;-webkit-text-stroke:0.15px #1e1e1e;">19.05.2019</span>
<span class="t" id="t87" style="left:582px;top:494.00px;font-size:13px;color:#1e1e1e;-webkit-text-stroke:0.15px #1e1e1e;">210</span>
<span class="t" id="t88" style="left:670.5px;top:494.00px;font-size:13px;color:#1e1e1e;-webkit-text-stroke:0.15px #1e1e1e;">59</span>
<span class="t" id="t89" style="letter-spacing:-0.178px;left:769px;top:494.00px;font-size:13px;color:#1e1e1e;-webkit-text-stroke:0.15px #1e1e1e;">20.03.2019</span>
<span class="t" id="t90" style="letter-spacing:-0.178px;left:841.9px;top:494.00px;font-size:13px;color:#1e1e1e;-webkit-text-stroke:0.15px #1e1e1e;">24.05.2019</span>
<span class="t" id="t91" style="left:978.3px;top:494.00px;font-size:13px;color:#1e1e1e;-webkit-text-stroke:0.15px #1e1e1e;">300</span>
<span class="t" id="t92" style="left:1107.2px;top:494.00px;font-size:13px;color:#1e1e1e;-webkit-text-stroke:0.15px #1e1e1e;">64</span>
<span class="t" id="t93" style="letter-spacing:0.166px;left:116.5px;top:534.00px;font-size:13px;color:#1e1e1e;-webkit-text-stroke:0.15px #1e1e1e;">Проект 2</span>
<span class="t" id="t94" style="letter-spacing:0.252px;left:212px;top:534.00px;font-size:13px;color:#1e1e1e;-webkit-text-stroke:0.15px #1e1e1e;">Категория 2</span>
<span class="t" id="t95" style="letter-spacing:0.273px;left:308.3px;top:534.00px;font-size:13px;color:#1e1e1e;-webkit-text-stroke:0.15px #1e1e1e;">Сотрудник 4</span>
<span class="t" id="t96" style="letter-spacing:-0.178px;left:396.9px;top:534.00px;font-size:13px;color:#1e1e1e;-webkit-text-stroke:0.15px #1e1e1e;">13.04.2019</span>
<span class="t" id="t97" style="letter-spacing:-0.178px;left:486px;top:534.00px;font-size:13px;color:#1e1e1e;-webkit-text-stroke:0.15px #1e1e1e;">14.05.2019</span>
<span class="t" id="t98" style="left:582px;top:534.00px;font-size:13px;color:#1e1e1e;-webkit-text-stroke:0.15px #1e1e1e;">400</span>
<span class="t" id="t99" style="left:670.5px;top:534.00px;font-size:13px;color:#1e1e1e;-webkit-text-stroke:0.15px #1e1e1e;">31</span>
<span class="t" id="t100" style="letter-spacing:-0.178px;left:769px;top:534.00px;font-size:13px;color:#1e1e1e;-webkit-text-stroke:0.15px #1e1e1e;">13.04.2019</span>
<span class="t" id="t101" style="letter-spacing:-0.178px;left:841.9px;top:534.00px;font-size:13px;color:#1e1e1e;-webkit-text-stroke:0.15px #1e1e1e;">17.05.2019</span>
<span class="t" id="t102" style="left:978.3px;top:534.00px;font-size:13px;color:#1e1e1e;-webkit-text-stroke:0.15px #1e1e1e;">390</span>
<span class="t" id="t103" style="left:1107.2px;top:534.00px;font-size:13px;color:#1e1e1e;-webkit-text-stroke:0.15px #1e1e1e;">34</span>
<span class="t" id="t104" style="letter-spacing:0.166px;left:116.5px;top:574.00px;font-size:13px;color:#1e1e1e;-webkit-text-stroke:0.15px #1e1e1e;">Проект 3</span>
<span class="t" id="t105" style="letter-spacing:0.252px;left:212px;top:574.00px;font-size:13px;color:#1e1e1e;-webkit-text-stroke:0.15px #1e1e1e;">Категория 1</span>
<span class="t" id="t106" style="letter-spacing:0.273px;left:308.3px;top:574.00px;font-size:13px;color:#1e1e1e;-webkit-text-stroke:0.15px #1e1e1e;">Сотрудник 2</span>
<span class="t" id="t107" style="letter-spacing:-0.178px;left:396.9px;top:574.00px;font-size:13px;color:#1e1e1e;-webkit-text-stroke:0.15px #1e1e1e;">13.02.2019</span>
<span class="t" id="t108" style="letter-spacing:-0.178px;left:486px;top:574.00px;font-size:13px;color:#1e1e1e;-webkit-text-stroke:0.15px #1e1e1e;">14.04.2019</span>
<span class="t" id="t109" style="left:582px;top:574.00px;font-size:13px;color:#1e1e1e;-webkit-text-stroke:0.15px #1e1e1e;">500</span>
<span class="t" id="t110" style="left:670.5px;top:574.00px;font-size:13px;color:#1e1e1e;-webkit-text-stroke:0.15px #1e1e1e;">61</span>
<span class="t" id="t111" style="letter-spacing:-0.178px;left:769px;top:574.00px;font-size:13px;color:#1e1e1e;-webkit-text-stroke:0.15px #1e1e1e;">13.02.2019</span>
<span class="t" id="t112" style="letter-spacing:-0.178px;left:841.9px;top:574.00px;font-size:13px;color:#1e1e1e;-webkit-text-stroke:0.15px #1e1e1e;">27.04.2019</span>
<span class="t" id="t113" style="left:978.3px;top:574.00px;font-size:13px;color:#1e1e1e;-webkit-text-stroke:0.15px #1e1e1e;">500</span>
<span class="t" id="t114" style="left:1107.2px;top:574.00px;font-size:13px;color:#1e1e1e;-webkit-text-stroke:0.15px #1e1e1e;">74</span>
<span class="t" id="t115" style="letter-spacing:0.166px;left:116.5px;top:614.00px;font-size:13px;color:#1e1e1e;-webkit-text-stroke:0.15px #1e1e1e;">Проект 4</span>
<span class="t" id="t116" style="letter-spacing:0.252px;left:212px;top:614.00px;font-size:13px;color:#1e1e1e;-webkit-text-stroke:0.15px #1e1e1e;">Категория 2</span>
<span class="t" id="t117" style="letter-spacing:0.273px;left:308.3px;top:614.00px;font-size:13px;color:#1e1e1e;-webkit-text-stroke:0.15px #1e1e1e;">Сотрудник 3</span>
<span class="t" id="t118" style="letter-spacing:-0.178px;left:396.9px;top:614.00px;font-size:13px;color:#1e1e1e;-webkit-text-stroke:0.15px #1e1e1e;">23.02.2019</span>
<span class="t" id="t119" style="letter-spacing:-0.178px;left:486px;top:614.00px;font-size:13px;color:#1e1e1e;-webkit-text-stroke:0.15px #1e1e1e;">05.03.2019</span>
<span class="t" id="t120" style="left:582px;top:614.00px;font-size:13px;color:#1e1e1e;-webkit-text-stroke:0.15px #1e1e1e;">250</span>
<span class="t" id="t121" style="left:670.5px;top:614.00px;font-size:13px;color:#1e1e1e;-webkit-text-stroke:0.15px #1e1e1e;">12</span>
<span class="t" id="t122" style="letter-spacing:-0.178px;left:769px;top:614.00px;font-size:13px;color:#1e1e1e;-webkit-text-stroke:0.15px #1e1e1e;">23.02.2019</span>
<span class="t" id="t123" style="letter-spacing:-0.178px;left:841.9px;top:614.00px;font-size:13px;color:#1e1e1e;-webkit-text-stroke:0.15px #1e1e1e;">14.03.2019</span>
<span class="t" id="t124" style="left:978.3px;top:614.00px;font-size:13px;color:#1e1e1e;-webkit-text-stroke:0.15px #1e1e1e;">276</span>
<span class="t" id="t125" style="left:1107.2px;top:614.00px;font-size:13px;color:#1e1e1e;-webkit-text-stroke:0.15px #1e1e1e;">21</span>
<span class="t" id="t126" style="letter-spacing:0.166px;left:116.5px;top:654.00px;font-size:13px;color:#1e1e1e;-webkit-text-stroke:0.15px #1e1e1e;">Проект 5</span>
<span class="t" id="t127" style="letter-spacing:0.252px;left:212px;top:654.00px;font-size:13px;color:#1e1e1e;-webkit-text-stroke:0.15px #1e1e1e;">Категория 3</span>
<span class="t" id="t128" style="letter-spacing:0.273px;left:308.3px;top:654.00px;font-size:13px;color:#1e1e1e;-webkit-text-stroke:0.15px #1e1e1e;">Сотрудник 2</span>
<span class="t" id="t129" style="letter-spacing:-0.178px;left:396.9px;top:654.00px;font-size:13px;color:#1e1e1e;-webkit-text-stroke:0.15px #1e1e1e;">23.02.2019</span>
<span class="t" id="t130" style="letter-spacing:-0.178px;left:486px;top:654.00px;font-size:13px;color:#1e1e1e;-webkit-text-stroke:0.15px #1e1e1e;">04.04.2019</span>
<span class="t" id="t131" style="left:582px;top:654.00px;font-size:13px;color:#1e1e1e;-webkit-text-stroke:0.15px #1e1e1e;">300</span>
<span class="t" id="t132" style="left:670.5px;top:654.00px;font-size:13px;color:#1e1e1e;-webkit-text-stroke:0.15px #1e1e1e;">41</span>
<span class="t" id="t133" style="letter-spacing:-0.178px;left:769px;top:654.00px;font-size:13px;color:#1e1e1e;-webkit-text-stroke:0.15px #1e1e1e;">23.02.2019</span>
<span class="t" id="t134" style="letter-spacing:-0.178px;left:841.9px;top:654.00px;font-size:13px;color:#1e1e1e;-webkit-text-stroke:0.15px #1e1e1e;">10.04.2019</span>
<span class="t" id="t135" style="left:978.3px;top:654.00px;font-size:13px;color:#1e1e1e;-webkit-text-stroke:0.15px #1e1e1e;">310</span>
<span class="t" id="t136" style="left:1107.2px;top:654.00px;font-size:13px;color:#1e1e1e;-webkit-text-stroke:0.15px #1e1e1e;">47</span>
<span class="t" id="t137" style="letter-spacing:0.166px;left:116.5px;top:694.00px;font-size:13px;color:#1e1e1e;-webkit-text-stroke:0.15px #1e1e1e;">Проект 6</span>
<span class="t" id="t138" style="letter-spacing:0.252px;left:212px;top:694.00px;font-size:13px;color:#1e1e1e;-webkit-text-stroke:0.15px #1e1e1e;">Категория 4</span>
<span class="t" id="t139" style="letter-spacing:0.273px;left:308.3px;top:694.00px;font-size:13px;color:#1e1e1e;-webkit-text-stroke:0.15px #1e1e1e;">Сотрудник 4</span>
<span class="t" id="t140" style="letter-spacing:-0.178px;left:396.9px;top:694.00px;font-size:13px;color:#1e1e1e;-webkit-text-stroke:0.15px #1e1e1e;">25.03.2019</span>
<span class="t" id="t141" style="letter-spacing:-0.178px;left:486px;top:694.00px;font-size:13px;color:#1e1e1e;-webkit-text-stroke:0.15px #1e1e1e;">04.04.2019</span>
<span class="t" id="t142" style="left:582px;top:694.00px;font-size:13px;color:#1e1e1e;-webkit-text-stroke:0.15px #1e1e1e;">500</span>
<span class="t" id="t143" style="left:670.5px;top:694.00px;font-size:13px;color:#1e1e1e;-webkit-text-stroke:0.15px #1e1e1e;">9</span>
<span class="t" id="t144" style="letter-spacing:-0.178px;left:769px;top:694.00px;font-size:13px;color:#1e1e1e;-webkit-text-stroke:0.15px #1e1e1e;">25.03.2019</span>
<span class="t" id="t145" style="letter-spacing:-0.178px;left:841.9px;top:694.00px;font-size:13px;color:#1e1e1e;-webkit-text-stroke:0.15px #1e1e1e;">09.04.2019</span>
<span class="t" id="t146" style="left:978.3px;top:694.00px;font-size:13px;color:#1e1e1e;-webkit-text-stroke:0.15px #1e1e1e;">510</span>
<span class="t" id="t147" style="left:1107.2px;top:694.00px;font-size:13px;color:#1e1e1e;-webkit-text-stroke:0.15px #1e1e1e;">14</span>
<span class="t" id="t148" style="letter-spacing:0.166px;left:116.5px;top:734.00px;font-size:13px;color:#1e1e1e;-webkit-text-stroke:0.15px #1e1e1e;">Проект 7</span>
<span class="t" id="t149" style="letter-spacing:0.252px;left:212px;top:734.00px;font-size:13px;color:#1e1e1e;-webkit-text-stroke:0.15px #1e1e1e;">Категория 5</span>
<span class="t" id="t150" style="letter-spacing:0.273px;left:308.3px;top:734.00px;font-size:13px;color:#1e1e1e;-webkit-text-stroke:0.15px #1e1e1e;">Сотрудник 1</span>
<span class="t" id="t151" style="letter-spacing:-0.178px;left:396.9px;top:734.00px;font-size:13px;color:#1e1e1e;-webkit-text-stroke:0.15px #1e1e1e;">10.04.2019</span>
<span class="t" id="t152" style="letter-spacing:-0.178px;left:486px;top:734.00px;font-size:13px;color:#1e1e1e;-webkit-text-stroke:0.15px #1e1e1e;">04.05.2019</span>
<span class="t" id="t153" style="left:582px;top:734.00px;font-size:13px;color:#1e1e1e;-webkit-text-stroke:0.15px #1e1e1e;">750</span>
<span class="t" id="t154" style="left:670.5px;top:734.00px;font-size:13px;color:#1e1e1e;-webkit-text-stroke:0.15px #1e1e1e;">24</span>
<span class="t" id="t155" style="letter-spacing:-0.178px;left:769px;top:734.00px;font-size:13px;color:#1e1e1e;-webkit-text-stroke:0.15px #1e1e1e;">10.04.2019</span>
<span class="t" id="t156" style="letter-spacing:-0.178px;left:841.9px;top:734.00px;font-size:13px;color:#1e1e1e;-webkit-text-stroke:0.15px #1e1e1e;">09.05.2019</span>
<span class="t" id="t157" style="left:978.3px;top:734.00px;font-size:13px;color:#1e1e1e;-webkit-text-stroke:0.15px #1e1e1e;">790</span>
<span class="t" id="t158" style="left:1107.2px;top:734.00px;font-size:13px;color:#1e1e1e;-webkit-text-stroke:0.15px #1e1e1e;">29</span>
<svg style="left:0;top:0" width="1236" height="827"><rect x="930" y="492" width="2" height="15" fill="#6e6e6e"/><path d="M933 492 l11 4.5 l-11 4.5 z" fill="#b8421a"/><rect x="1059" y="612" width="2" height="15" fill="#6e6e6e"/><path d="M1062 612 l11 4.5 l-11 4.5 z" fill="#b8421a"/><rect x="1059" y="692" width="2" height="15" fill="#6e6e6e"/><path d="M1062 692 l11 4.5 l-11 4.5 z" fill="#b8421a"/></svg>
<div class="a" style="left:81.3px;top:294.2px;width:205.3px;height:145px;background:#ffffe1;border:1px solid #767676;"></div>
<span class="t" id="t159" style="letter-spacing:-0.043px;left:88.4px;top:301.27px;font-size:11.5px;color:#1e1e1e;">Введите здесь названия проектов. В</span>
<span class="t" id="t160" style="letter-spacing:0.212px;left:88.4px;top:316.23px;font-size:11.5px;color:#1e1e1e;">ячейке D2 укажите максимальный</span>
<span class="t" id="t161" style="letter-spacing:0.342px;left:88.4px;top:331.19px;font-size:11.5px;color:#1e1e1e;">процент отклонения. Слишком</span>
<span class="t" id="t162" style="letter-spacing:0.217px;left:88.4px;top:346.15px;font-size:11.5px;color:#1e1e1e;">высокие и низкие значения</span>
<span class="t" id="t163" style="letter-spacing:0.028px;left:88.4px;top:361.11px;font-size:11.5px;color:#1e1e1e;">фактических трудозатрат (в часах)</span>
<span class="t" id="t164" style="letter-spacing:0.030px;left:88.4px;top:376.07px;font-size:11.5px;color:#1e1e1e;">и длительности (в днях)</span>
<span class="t" id="t165" style="letter-spacing:0.356px;left:88.4px;top:391.03px;font-size:11.5px;color:#1e1e1e;">выделяются полужирным</span>
<span class="t" id="t166" style="letter-spacing:0.330px;left:88.4px;top:405.99px;font-size:11.5px;color:#1e1e1e;">красным шрифтом и флагами в</span>
<span class="t" id="t167" style="letter-spacing:0.097px;left:88.4px;top:420.95px;font-size:11.5px;color:#1e1e1e;">столбцах К и М.</span>
<div class="a" style="left:31px;top:746px;width:1174px;height:28px;background:#6a6a6a;"></div>
<div class="a" style="left:31px;top:746px;width:1152px;height:1px;background:#8a8a8a;"></div>
<div class="a" style="left:131.5px;top:746px;width:58.7px;height:25px;background:#ffffff;"></div>
<div class="a" style="left:131.5px;top:769px;width:58.7px;height:2px;background:#217346;"></div>
<span class="t" id="t168" style="letter-spacing:-0.277px;left:142.9px;top:753.42px;font-size:12.5px;color:#217346;font-weight:700;">Лист1</span>
<svg style="left:0;top:0" width="1236" height="827"><path d="M63 756 v8 l-4 -4 z" fill="#9a9a9a"/><path d="M87 756 v8 l4 -4 z" fill="#9a9a9a"/><circle cx="232" cy="760" r="7.5" stroke="#fff" stroke-width="1.4" fill="none"/><path d="M232 756 v8 M228 760 h8" stroke="#fff" stroke-width="1.6"/><circle cx="735.5" cy="755" r="1" fill="#fff"/><circle cx="735.5" cy="759.5" r="1" fill="#fff"/><circle cx="735.5" cy="764" r="1" fill="#fff"/></svg>
<div class="a" style="left:752.4px;top:753.2px;width:432.8px;height:14.2px;background:#555555;"></div>
<div class="a" style="left:752.4px;top:753.2px;width:14.1px;height:14.2px;background:#a6a6a6;border:1px solid #454545;"></div>
<div class="a" style="left:1171px;top:753.2px;width:14.2px;height:14.2px;background:#a6a6a6;border:1px solid #454545;"></div>
<div class="a" style="left:767px;top:753.5px;width:347.4px;height:13.5px;background:#9c9c9c;"></div>
<svg style="left:0;top:0" width="1236" height="827"><path d="M761.5 756.5 v7 l-3.5 -3.5 z" fill="#333"/><path d="M1176.5 756.5 v7 l3.5 -3.5 z" fill="#333"/></svg>
<div class="a" style="left:1187.5px;top:240px;width:14px;height:506px;background:#555555;"></div>
<div class="a" style="left:1187.5px;top:240px;width:14px;height:14.5px;background:#a6a6a6;border:1px solid #454545;"></div>
<div class="a" style="left:1187.5px;top:731px;width:14px;height:14.5px;background:#a6a6a6;border:1px solid #454545;"></div>
<div class="a" style="left:1188px;top:256px;width:13px;height:355.6px;background:#9c9c9c;"></div>
<svg style="left:0;top:0" width="1236" height="827"><path d="M1191 250 h7 l-3.5 -3.5 z" fill="#333"/><path d="M1191 736 h7 l-3.5 3.5 z" fill="#333"/></svg>
<div class="a" style="left:31px;top:774px;width:1174px;height:1px;background:#3c3c3c;"></div>
<div class="a" style="left:31px;top:775px;width:1174px;height:21px;background:#c6c3c0;"></div>
<div class="a" style="left:905.2px;top:774.5px;width:37.7px;height:21.5px;background:#9c9c9c;"></div>
<svg style="left:0;top:0" width="1236" height="827"><rect x="917.5" y="778.5" width="12.5" height="12.5" fill="none" stroke="#fff" stroke-width="1.2"/><path d="M921.7 778.5 v12.5 M925.8 778.5 v12.5 M917.5 782.7 h12.5 M917.5 786.8 h12.5" stroke="#fff" stroke-width="1.1"/><rect x="955.5" y="778.5" width="13.5" height="12.5" fill="none" stroke="#fff" stroke-width="1.2"/><rect x="958.5" y="780.5" width="7.5" height="8.5" fill="none" stroke="#fff" stroke-width="1.1"/><path d="M960 782.8 h4.5 M960 784.8 h4.5 M960 786.8 h4.5" stroke="#fff" stroke-width="0.9"/><rect x="993.5" y="778.5" width="13" height="12.5" fill="none" stroke="#fff" stroke-width="1.2"/><path d="M994 779 h5 v7 h-5 z M1000 779 h4 v7 h-4 z" fill="#f4f4f4"/><path d="M994 786.5 h10.5 v-7.5" fill="none" stroke="#fff" stroke-width="1.2"/><path d="M1023 786 h7" stroke="#fff" stroke-width="2"/><path d="M1034.7 785.5 h98.7" stroke="#7a7a7a" stroke-width="1"/><rect x="1082" y="780" width="4" height="11" fill="#777"/><path d="M1137 786 h8 M1141 782 v8" stroke="#fff" stroke-width="2"/></svg>
<span class="t" id="t169" style="letter-spacing:-0.722px;left:1156px;top:778.77px;font-size:11.5px;color:#262626;">100 %</span>
<div class="a" style="left:726.5px;top:169px;width:309px;height:159px;background:rgba(0,0,0,0.12);border-radius:2px;"></div>
<div class="a" style="left:728.4px;top:170px;width:304.1px;height:155.3px;background:#f1f1f1;border:1px solid #c8c8c8;"></div>
<svg style="left:0;top:0" width="1236" height="827"><rect x="747.6" y="186" width="18.4" height="7.6" fill="#4a90e2"/><rect x="738" y="193" width="10" height="15" fill="#4a90e2"/><rect x="748" y="193.6" width="17.5" height="14.4" fill="#fff"/><path d="M756.4 193.6 v14.4 M748 200.4 h18 M748 207.5 h18 M765.5 193.6 v14.4" stroke="#111" stroke-width="1.1"/><path d="M741.6 181.1 v10.6 M737.0 183.75 l9.2 5.3 M746.2 183.75 l-9.2 5.3" stroke="#2d7fd8" stroke-width="1.5"/><path d="M740.1 181.9 l1.5 1.2 l1.5 -1.2 M740.1 190.9 l1.5 -1.2 l1.5 1.2" stroke="#2d7fd8" stroke-width="1" fill="none"/><rect x="748" y="288.1" width="17.5" height="21.5" fill="#fff" stroke="#111" stroke-width="1.1"/><rect x="738" y="295.1" width="10" height="14.5" fill="#4a90e2"/><path d="M756.4 288.1 v21.5 M748 295.3 h17.5 M748 302.40000000000003 h17.5 M738 309.3 h27.5" stroke="#111" stroke-width="1.1"/><path d="M741.6 283.0 v10.6 M737.0 285.65000000000003 l9.2 5.3 M746.2 285.65000000000003 l-9.2 5.3" stroke="#2d7fd8" stroke-width="1.5"/><path d="M740.1 283.8 l1.5 1.2 l1.5 -1.2 M740.1 292.8 l1.5 -1.2 l1.5 1.2" stroke="#2d7fd8" stroke-width="1" fill="none"/></svg>
<span class="t" id="t170" style="letter-spacing:-0.020px;left:782.4px;top:176.97px;font-size:11.5px;color:#262626;font-weight:700;">Закрепить области</span>
<div class="a" style="left:782.4px;top:188.3px;width:7px;height:1px;background:#262626;"></div>
<span class="t" id="t171" style="letter-spacing:0.155px;left:782.4px;top:194.17px;font-size:11.5px;color:#262626;">Выделенные строки и столбцы всегда будут</span>
<span class="t" id="t172" style="letter-spacing:0.146px;left:782.4px;top:210.07px;font-size:11.5px;color:#262626;">видны на экране во время прокрутки листа.</span>
<div class="a" style="left:722.2px;top:215.4px;width:316.1px;height:61.6px;background:#ffffff;border-radius:8px;box-shadow:0 1px 3px rgba(0,0,0,0.5);"></div>
<div class="a" style="left:723.2px;top:216.4px;width:314.1px;height:59.6px;background:#ff0000;border-radius:7px;"></div>
<div class="a" style="left:726.2px;top:219.4px;width:308.1px;height:53.6px;background:#ffffff;border-radius:5px;"></div>
<div class="a" style="left:729.4px;top:221.5px;width:301.6px;height:51px;background:#9a9a9a;border:1px solid #7e7e7e;border-radius:3px;"></div>
<svg style="left:0;top:0" width="1236" height="827"><rect x="747" y="237" width="19" height="7.3" fill="#4a90e2"/><rect x="736.5" y="244.3" width="29.2" height="14.4" fill="#fff" stroke="#111" stroke-width="1.1"/><path d="M747.6 244.3 v14.4 M756.8 244.3 v14.4 M736.5 251.4 h29.2" stroke="#111" stroke-width="1.1"/><path d="M741.3 232.7 v10.6 M736.6999999999999 235.35 l9.2 5.3 M745.9 235.35 l-9.2 5.3" stroke="#2d7fd8" stroke-width="1.5"/><path d="M739.8 233.5 l1.5 1.2 l1.5 -1.2 M739.8 242.5 l1.5 -1.2 l1.5 1.2" stroke="#2d7fd8" stroke-width="1" fill="none"/></svg>
<span class="t" id="t173" style="letter-spacing:0.154px;left:782.4px;top:227.77px;font-size:11.5px;color:#1a1a1a;font-weight:700;">Закрепить верхнюю строку</span>
<div class="a" style="left:866px;top:239.3px;width:7px;height:1px;background:#1a1a1a;"></div>
<span class="t" id="t174" style="letter-spacing:-0.020px;left:782.4px;top:245.07px;font-size:11.5px;color:#1e1e1e;">Верхняя строка всегда будет видна на</span>
<span class="t" id="t175" style="letter-spacing:0.218px;left:782.4px;top:259.77px;font-size:11.5px;color:#1e1e1e;">экране во время прокрутки листа.</span>
<span class="t" id="t176" style="letter-spacing:0.143px;left:782.4px;top:279.37px;font-size:11.5px;color:#262626;font-weight:700;">Закрепить первый столбец</span>
<div class="a" style="left:884.4px;top:290.8px;width:7px;height:1px;background:#262626;"></div>
<span class="t" id="t177" style="letter-spacing:0.046px;left:782.4px;top:296.07px;font-size:11.5px;color:#262626;">Первый столбец всегда будет виден на</span>
<span class="t" id="t178" style="letter-spacing:0.218px;left:782.4px;top:310.87px;font-size:11.5px;color:#262626;">экране во время прокрутки листа.</span>
</body></html>
